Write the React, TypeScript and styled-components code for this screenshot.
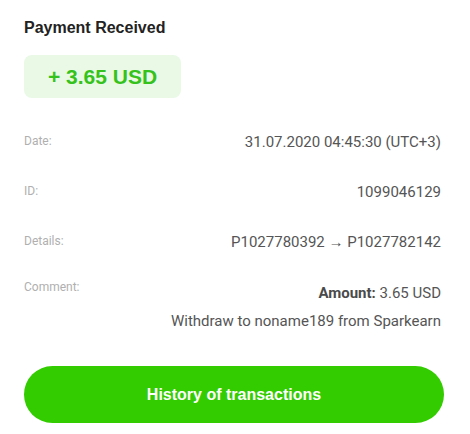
import React from "react";
import styled, { createGlobalStyle } from "styled-components";

const Global = createGlobalStyle`
  html, body { margin: 0; padding: 0; background: #fff; }
  * { box-sizing: border-box; }
`;

const Card = styled.div`
  width: 470px;
  padding: 18px 29px 0 24px;
  font-family: Roboto, "Liberation Sans", sans-serif;
  display: flex;
  flex-direction: column;
`;

const Title = styled.h1`
  margin: 0;
  font-family: "Liberation Sans", Arial, sans-serif;
  font-weight: 700;
  font-size: 16px;
  line-height: 20px;
  color: #222;
`;

const Badge = styled.div`
  align-self: flex-start;
  margin-top: 17px;
  height: 43px;
  padding: 0 24px;
  display: flex;
  align-items: center;
  border-radius: 8px;
  background: #e9f9e5;
  color: #36c21c;
  font-family: "Liberation Sans", Arial, sans-serif;
  font-weight: 700;
  font-size: 21px;
`;

const Rows = styled.div`
  margin-top: 34px;
  display: flex;
  flex-direction: column;
`;

const Row = styled.div<{ $h?: number }>`
  display: flex;
  justify-content: space-between;
  align-items: flex-start;
  height: ${(p) => (p.$h ? `${p.$h}px` : "auto")};
`;

const Label = styled.div`
  font-size: 12px;
  line-height: 18px;
  color: #b0b0b0;
`;

const Values = styled.div<{ $offset?: number }>`
  display: flex;
  flex-direction: column;
  align-items: flex-end;
  gap: 8px;
  margin-top: ${(p) => p.$offset ?? 0}px;
`;

const Value = styled.div`
  font-size: 15px;
  line-height: 20px;
  color: #555;
  text-align: right;
`;

const Strong = styled.b`
  font-weight: 700;
  color: #4a4a4a;
`;

const Button = styled.button`
  margin-top: 35px;
  width: 420px;
  height: 57px;
  border: none;
  border-radius: 29px;
  background: #33cc00;
  color: #fff;
  font-family: "Liberation Sans", Arial, sans-serif;
  font-weight: 700;
  font-size: 16px;
  cursor: pointer;
`;

export default function App() {
  return (
    <>
      <Global />
      <Card>
        <Title>Payment Received</Title>
        <Badge>+ 3.65 USD</Badge>
        <Rows>
          <Row $h={50}>
            <Label>Date:</Label>
            <Value>31.07.2020 04:45:30 (UTC+3)</Value>
          </Row>
          <Row $h={50}>
            <Label>ID:</Label>
            <Value>1099046129</Value>
          </Row>
          <Row $h={46}>
            <Label>Details:</Label>
            <Value>P1027780392 → P1027782142</Value>
          </Row>
          <Row>
            <Label>Comment:</Label>
            <Values $offset={5}>
              <Value>
                <Strong>Amount:</Strong> 3.65 USD
              </Value>
              <Value>Withdraw to noname189 from Sparkearn</Value>
            </Values>
          </Row>
        </Rows>
        <Button>History of transactions</Button>
      </Card>
    </>
  );
}
